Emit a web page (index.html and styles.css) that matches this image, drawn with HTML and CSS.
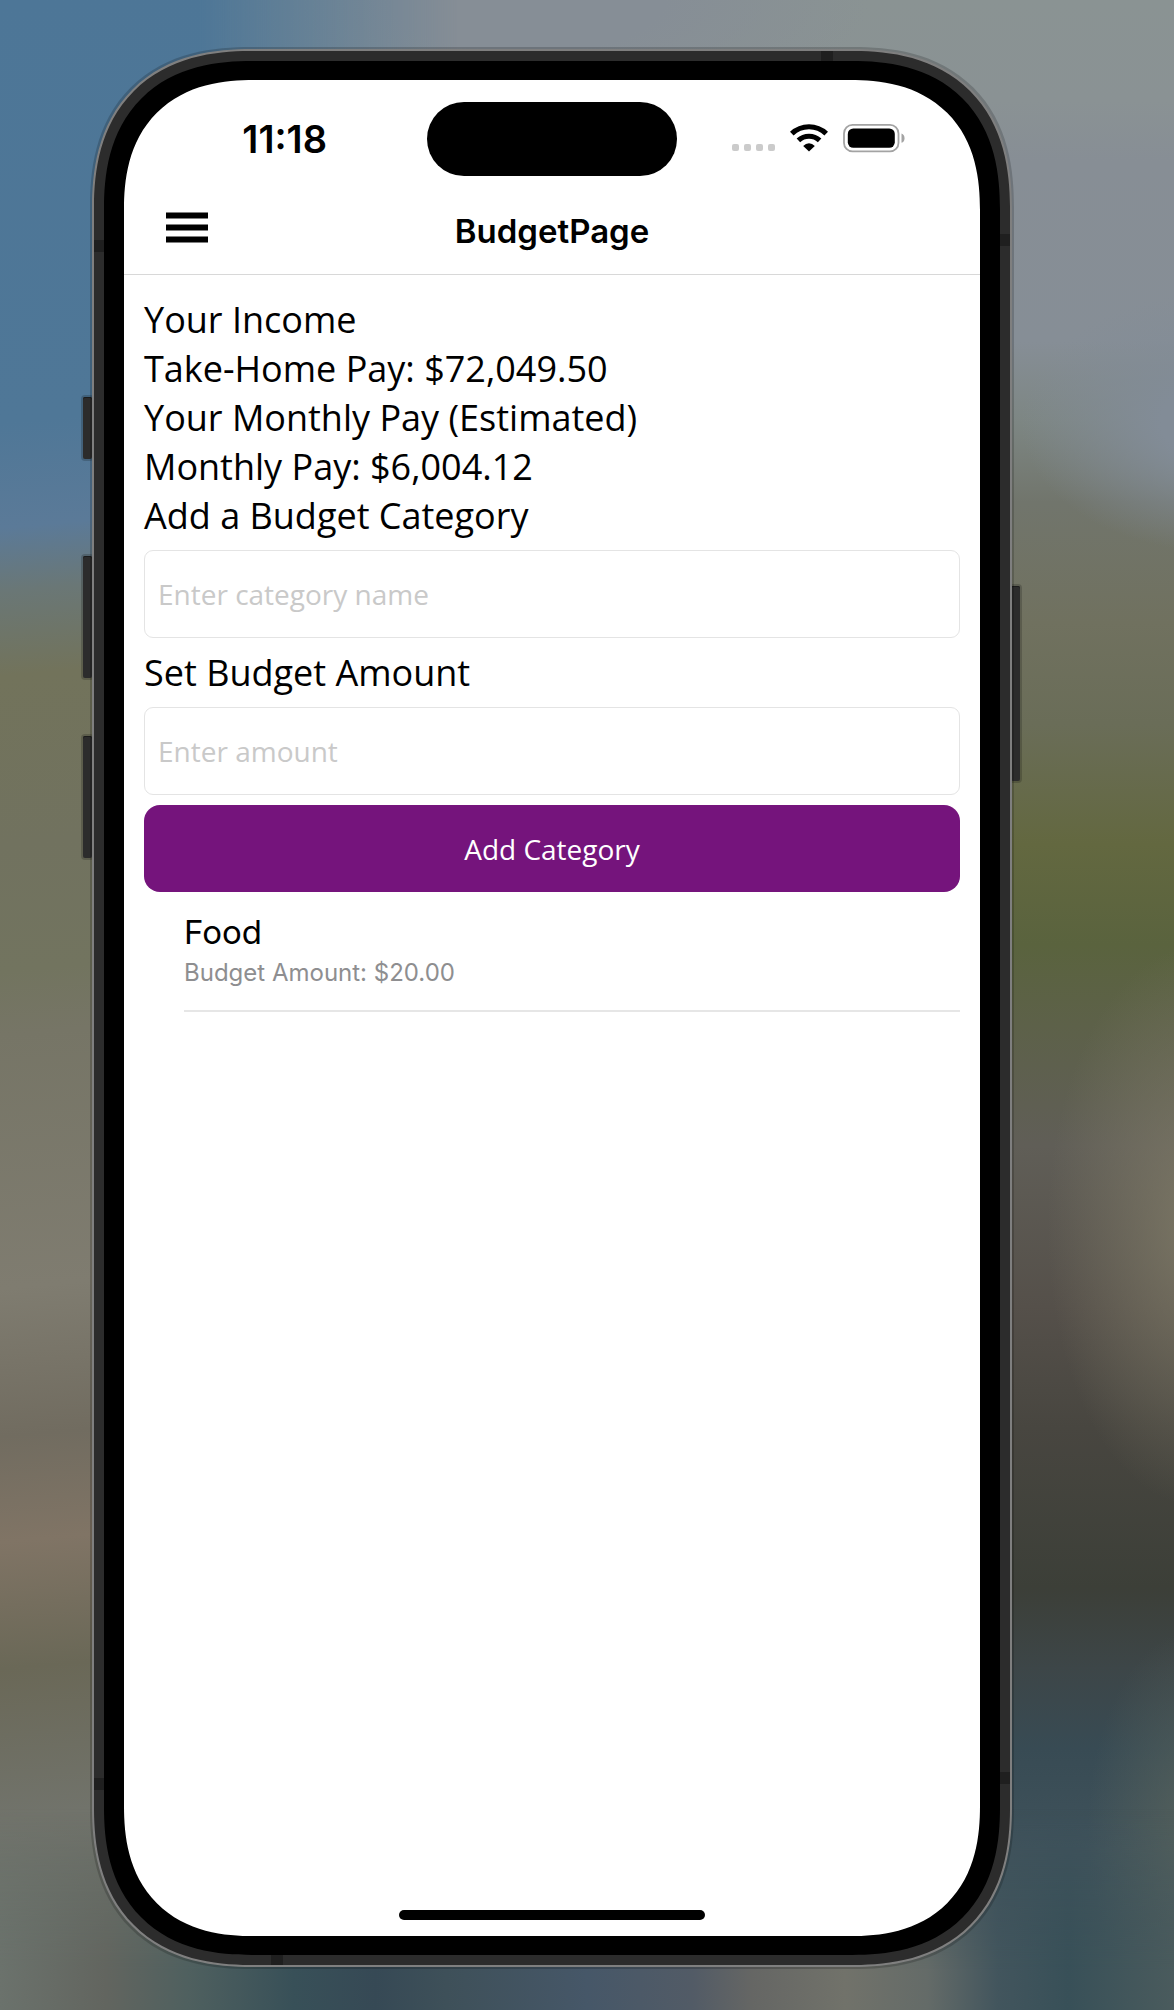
FILE: index.html
```html
<!DOCTYPE html>
<html lang="en">
<head>
  <meta charset="utf-8">
  <meta name="viewport" content="width=device-width, initial-scale=1">
  <title>BudgetPage</title>
  <link rel="stylesheet" href="styles.css">
</head>
<body>
  <div class="desktop">
    <div class="phone">
      <span class="key key-action"></span>
      <span class="key key-up"></span>
      <span class="key key-down"></span>
      <span class="key key-power"></span>
      <div class="frame">
        <span class="band band-top"></span>
        <span class="band band-bottom"></span>
        <span class="band band-left-top"></span>
        <span class="band band-left-bottom"></span>
        <span class="band band-right-top"></span>
        <span class="band band-right-bottom"></span>
        <div class="bezel">
          <div class="screen">
            <div class="status">
              <time class="clock">11:18</time>
              <div class="island"></div>
              <div class="indicators">
                <svg class="signal" width="44" height="30" viewBox="0 0 44 30" aria-hidden="true">
                  <g fill="#cbcbcb">
                    <rect x="0" y="20" width="7" height="7" rx="2"/>
                    <rect x="12" y="20" width="7" height="7" rx="2"/>
                    <rect x="24" y="20" width="7" height="7" rx="2"/>
                    <rect x="36" y="20" width="7" height="7" rx="2"/>
                  </g>
                </svg>
                <svg class="wifi" width="38" height="30" viewBox="0 0 38 30" aria-hidden="true">
                  <g fill="none" stroke="#000" stroke-width="5.2">
                    <path d="M1.8 9.6A25 25 0 0 1 36.2 9.6"/>
                    <path d="M8.4 16.4A15.6 15.6 0 0 1 29.6 16.4"/>
                  </g>
                  <path d="M19 27.6L13.2 21.9Q15.8 19.3 19 19.3T24.8 21.9Z"/>
                </svg>
                <svg class="battery" width="63" height="30" viewBox="-1 0 63 30" aria-hidden="true">
                  <rect x="1" y="0.900" width="54.500" height="26.500" rx="8.500" fill="none" stroke="#a3a3a3" stroke-width="1.800"/>
                  <rect x="4.800" y="4.400" width="47" height="19.400" rx="5.500"/>
                  <path d="M58.500 9.600Q61.500 10.600 61.500 14.200T58.500 18.800Z" fill="#a3a3a3"/>
                </svg>
              </div>
            </div>
            <header class="nav">
              <button class="menu" type="button" aria-label="Open menu">
                <svg width="42" height="38" viewBox="0 0 42 38" aria-hidden="true">
                  <path d="M0 .5h42v6H0zM0 12.500h42v6H0zM0 24.500h42v6H0z"/>
                </svg>
              </button>
              <h1 class="title">BudgetPage</h1>
            </header>
            <main class="content">
              <div class="income">
                <h2 class="line">Your Income</h2>
                <p class="line">Take-Home Pay: $72,049.50</p>
                <h2 class="line">Your Monthly Pay (Estimated)</h2>
                <p class="line">Monthly Pay: $6,004.12</p>
              </div>
              <form class="form">
                <label class="line" for="category">Add a Budget Category</label>
                <input class="field" id="category" type="text" placeholder="Enter category name">
                <label class="line" for="amount">Set Budget Amount</label>
                <input class="field" id="amount" type="text" inputmode="decimal" placeholder="Enter amount">
                <button class="submit" type="button">Add Category</button>
              </form>
              <ul class="list">
                <li class="item">
                  <span class="item-name">Food</span>
                  <span class="item-detail">Budget Amount: $20.00</span>
                </li>
              </ul>
            </main>
            <div class="home"></div>
          </div>
        </div>
      </div>
    </div>
  </div>
</body>
</html>
```
FILE: styles.css
```css
* {
  box-sizing: border-box;
  margin: 0;
}

body {
  font-family: "Open Sans", "Noto Sans", sans-serif;
  color: #000;
}

/* Blurred wallpaper: right-hand colours, left-hand colours, bottom edge */
.desktop {
  position: relative;
  isolation: isolate;
  display: flex;
  min-height: 100vh;
  padding: 49px 162px 43px 92px;
  background:
    radial-gradient(ellipse 150px 280px at 102% 61%, rgba(130, 125, 105, .8), transparent),
    radial-gradient(ellipse 200px 130px at 104% 21%, #828c97 30%, transparent),
    radial-gradient(ellipse 110px 200px at 102% 91%, rgba(90, 100, 92, .8), transparent),
    radial-gradient(ellipse 340px 130px at 45% 0, #868e96 40%, transparent),
    linear-gradient(#8a9393 0, #8a9294 5%, #878e95 8%, #868e96 17%, #7d8683 21%, #71756c 25%, #70715f 31%, #6a6d58 36%, #636840 42%, #5a633e 47%, #5d6149 51%, #605e57 57%, #55504a 65%, #484640 71%, #3c3f38 79%, #3d4648 83%, #384b54 87%, #3f525b 92%, #3c515a);
}

.desktop::before,
.desktop::after {
  content: "";
  position: absolute;
  inset: 0;
  z-index: -1;
}

.desktop::before {
  background: linear-gradient(175deg, #4d7697 0, #4f7797 20%, #5b7a98 25%, #6a7776 28%, #72735b 32%, #71725f 40%, #72745f 46%, #767566 49%, #7f7c70 61%, #716c60 68%, #807465 73%, #6a6857 79%, #71736b 86%, #687069 92%, #636a67);
  mask-image: linear-gradient(90deg, #000 17%, transparent 39%);
}

.desktop::after {
  background: linear-gradient(90deg, #6b726c 0, #62655f 9%, #4f605f 16%, #385058 25%, #364955 32%, #3e5059 38%, #465768 50%, #525b66 59%, #656664 64%, #71726a 72%, #646b68 79%, #42555d 85%, #385058 91%, #4a5b5d);
  mask-image: linear-gradient(transparent 90%, #000 98%);
}

.phone {
  position: relative;
  display: flex;
  flex: 1;
}

.frame {
  position: relative;
  display: flex;
  flex: 1;
  padding: 10px;
  border: 2px solid #7f7f7f;
  border-radius: 160px;
  corner-shape: superellipse(1.25);
  background: #2c2c2c;
  box-shadow: 0 0 0 2px rgba(0, 0, 0, .18);
}

.bezel {
  display: flex;
  flex: 1;
  padding: 19px 20px;
  border-radius: 148px;
  corner-shape: superellipse(1.25);
  background: #000;
}

.screen {
  display: flex;
  flex: 1;
  flex-direction: column;
  border-radius: 130px;
  corner-shape: superellipse(1.25);
  background: #fff;
}

/* Side keys sit outside the frame */
.key {
  position: absolute;
  width: 9px;
  border-radius: 2px;
  background: #2c2c2c;
  box-shadow: 0 0 0 2px rgba(0, 0, 0, .18), inset 0 1px #1c1c1c;
}

.key-action { left: -9px; top: 348px; height: 62px; }
.key-up { left: -9px; top: 507px; height: 122px; }
.key-down { left: -9px; top: 687px; height: 122px; }
.key-power { right: -8px; top: 537px; height: 195px; }

/* Antenna bands on the metal edge */
.band {
  position: absolute;
  width: 10px;
  height: 12px;
  background: #1f1f1f;
}

.band-top { top: 0; right: 177px; width: 12px; height: 10px; }
.band-bottom { bottom: 0; left: 177px; width: 12px; height: 10px; }
.band-left-top { left: 0; top: 189px; }
.band-left-bottom { left: 0; bottom: 175px; }
.band-right-top { right: 0; top: 183px; }
.band-right-bottom { right: 0; bottom: 181px; }

.status {
  display: grid;
  grid-template-columns: 1fr 250px 1fr;
  align-items: center;
  padding-top: 22px;
}

.clock {
  padding-right: 100px;
  text-align: right;
  font: 600 38px/44px Inter, sans-serif;
}

.island {
  height: 74px;
  border-radius: 37px;
  background: #000;
}

.indicators {
  display: flex;
  gap: 14px;
  padding-left: 55px;
}

.nav {
  display: grid;
  grid-template-columns: 1fr auto 1fr;
  align-items: center;
  height: 99px;
  padding: 12px 42px 0;
  border-bottom: 1px solid #d8d8d8;
}

.menu {
  justify-self: start;
  padding: 0;
  border: 0;
  background: none;
}

.menu svg {
  display: block;
}

.title {
  font: 600 33px/40px Inter, sans-serif;
}

.content {
  flex: 1;
  padding: 20px 20px 0;
}

.line {
  display: block;
  font-size: 36px;
  font-weight: 400;
  line-height: 49px;
}

.form {
  display: flex;
  flex-direction: column;
  gap: 10px;
}

.field {
  width: 100%;
  height: 88px;
  padding: 0 13px;
  border: 1px solid #e4e4e4;
  border-radius: 9px;
  background: #fff;
  font: 28px/38px "Open Sans", "Noto Sans", sans-serif;
}

.field::placeholder {
  color: #c9c9c9;
}

.submit {
  height: 87px;
  border: 0;
  border-radius: 16px;
  background: #75147c;
  color: #fff;
  font: 28px/38px "Open Sans", "Noto Sans", sans-serif;
}

.list {
  padding: 19px 0 0 40px;
  list-style: none;
}

.item {
  display: flex;
  flex-direction: column;
  padding-bottom: 18px;
  border-bottom: 2px solid #e6e6e6;
  font-family: Inter, sans-serif;
}

.item-name {
  font-size: 33px;
  line-height: 42px;
}

.item-detail {
  color: #8e8e90;
  font-size: 24px;
  line-height: 39px;
}

.home {
  align-self: center;
  width: 306px;
  height: 10px;
  margin-bottom: 16px;
  border-radius: 5px;
  background: #000;
}
```
